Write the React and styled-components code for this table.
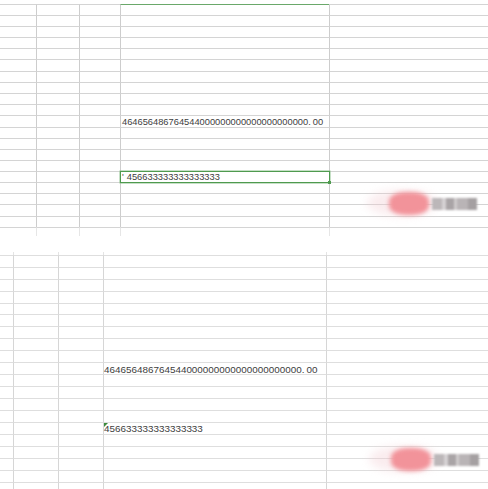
import styled, { createGlobalStyle } from 'styled-components';

const GlobalStyle = createGlobalStyle`
  html, body { margin: 0; padding: 0; background: #fff; }
  body {
    width: 488px; height: 489px; overflow: hidden;
    font-family: 'Liberation Sans', Arial, sans-serif;
  }
`;

const Page = styled.div`
  display: flex;
  flex-direction: column;
  width: 488px;
  height: 489px;
  overflow: hidden;
`;

const Sheet = styled.div`
  position: relative;
  display: flex;
  flex-direction: column;
  padding-top: ${(p) => p.$pt || 0}px;
  margin-top: ${(p) => p.$mt || 0}px;
`;

const Row = styled.div`
  display: grid;
  grid-template-columns: ${(p) => p.$cols};
  height: ${(p) => p.$h}px;
  flex-shrink: 0;
`;

const Cell = styled.div`
  position: relative;
  box-sizing: border-box;
  display: flex;
  align-items: flex-start;
  border-top: ${(p) => (p.$noTop ? '0' : `1px solid ${p.$accent ? '#6aa86a' : p.$line}`)};
  border-left: ${(p) => (p.$first ? '0' : `1px solid ${p.$col}`)};
  white-space: nowrap;
`;

const Value = styled.span`
  font-size: ${(p) => p.$size}px;
  line-height: 1;
  color: #404040;
  padding-left: ${(p) => p.$pl}px;
  padding-top: ${(p) => p.$pt}px;
`;

const Dot = styled.span`
  margin-right: 2px;
`;

const Quote = styled.span`
  margin-right: 3px;
  color: #555;
`;

const Selection = styled.div`
  position: absolute;
  top: -1px;
  left: -1px;
  right: -1px;
  bottom: -1px;
  border: 1px solid #4f9a4f;
  box-shadow: 0 0 0 0.5px #8cc08c;
  z-index: 2;
`;

const Handle = styled.div`
  position: absolute;
  right: -2px;
  bottom: -2px;
  width: 3px;
  height: 3px;
  background: #4f9a4f;
`;

const Flag = styled.div`
  position: absolute;
  top: 0;
  left: 0;
  width: 0;
  height: 0;
  border-top: 4px solid #3d8c3d;
  border-right: 4px solid transparent;
  z-index: 2;
`;

const Mark = styled.div`
  position: absolute;
  left: ${(p) => p.$x}px;
  top: ${(p) => p.$y}px;
  display: flex;
  align-items: center;
  z-index: 3;
`;

const Haze = styled.div`
  position: absolute;
  left: -22px;
  top: -2px;
  width: 70px;
  height: 26px;
  border-radius: 50%;
  background: rgba(240, 200, 205, 0.35);
  filter: blur(4px);
`;

const Blob = styled.div`
  position: relative;
  width: 40px;
  height: 23px;
  border-radius: 40%;
  background: #f2939a;
  filter: blur(2px);
`;

const Blocks = styled.div`
  display: flex;
  margin-left: 3px;
  filter: blur(0.8px);
`;

const Block = styled.div`
  width: ${(p) => p.$w}px;
  height: 12px;
  background: ${(p) => p.$c};
`;

const TOP = {
  cols: '36px 43px 41px 209px 1fr',
  line: '#d4d4d4',
  col: '#cdcdcd',
  heights: [11, 11, 11, 11, 11, 12, 11, 11, 11, 11, 12, 11, 11, 11, 11, 11, 11, 11, 12, 11],
};

const BOTTOM = {
  cols: '13px 45px 45px 223px 1fr',
  line: '#dedede',
  col: '#d6d6d6',
  heights: [12, 12, 12, 12, 11, 12, 12, 12, 12, 12, 12, 12, 12, 12, 12, 12, 12, 12, 12, 7],
};

const BIG = '464656486764544' + '0'.repeat(21);
const LONG = '4566' + '3'.repeat(14);

function Number({ size, pl, pt }) {
  return (
    <Value $size={size} $pl={pl} $pt={pt}>
      {BIG}<Dot>.</Dot>00
    </Value>
  );
}

function Watermark({ x, y }) {
  return (
    <Mark $x={x} $y={y}>
      <Haze />
      <Blob />
      <Blocks>
        <Block $w={10} $c="#bcb7b9" />
        <Block $w={4} $c="#d6d2d4" />
        <Block $w={8} $c="#a9a4a6" />
        <Block $w={3} $c="#d0cccd" />
        <Block $w={11} $c="#b9b4b6" />
        <Block $w={9} $c="#a5a0a2" />
      </Blocks>
    </Mark>
  );
}

function GridRow({ cfg, h, noTop, accent, children }) {
  return (
    <Row $cols={cfg.cols} $h={h}>
      {[0, 1, 2, 3, 4].map((i) => (
        <Cell
          key={i}
          $first={i === 0}
          $noTop={noTop}
          $accent={accent && i === 3}
          $line={cfg.line}
          $col={cfg.col}
        >
          {i === 3 && children}
        </Cell>
      ))}
    </Row>
  );
}

export default function App() {
  return (
    <Page>
      <GlobalStyle />
      <Sheet $pt={4}>
        {TOP.heights.map((h, i) => (
          <GridRow key={i} cfg={TOP} h={h} accent={i === 0}>
            {i === 10 && <Number size={9.3} pl={1} pt={2} />}
            {i === 15 && (
              <>
                <Selection>
                  <Handle />
                </Selection>
                <Value $size={9.3} $pl={1} $pt={1}>
                  <Quote>'</Quote>
                  {LONG}
                </Value>
              </>
            )}
          </GridRow>
        ))}
        <GridRow cfg={{ ...TOP, col: '#e6e6e6' }} h={9} />
        <Watermark x={389} y={192} />
      </Sheet>

      <Sheet $mt={16}>
        <GridRow cfg={{ ...BOTTOM, col: '#e4e4e4' }} h={3} noTop />
        {BOTTOM.heights.map((h, i) => (
          <GridRow key={i} cfg={BOTTOM} h={h}>
            {i === 9 && <Number size={9.9} pl={0} pt={2} />}
            {i === 14 && (
              <>
                <Flag />
                <Value $size={9.9} $pl={0} $pt={1}>
                  {LONG}
                </Value>
              </>
            )}
          </GridRow>
        ))}
        <Watermark x={391} y={196} />
      </Sheet>
    </Page>
  );
}
